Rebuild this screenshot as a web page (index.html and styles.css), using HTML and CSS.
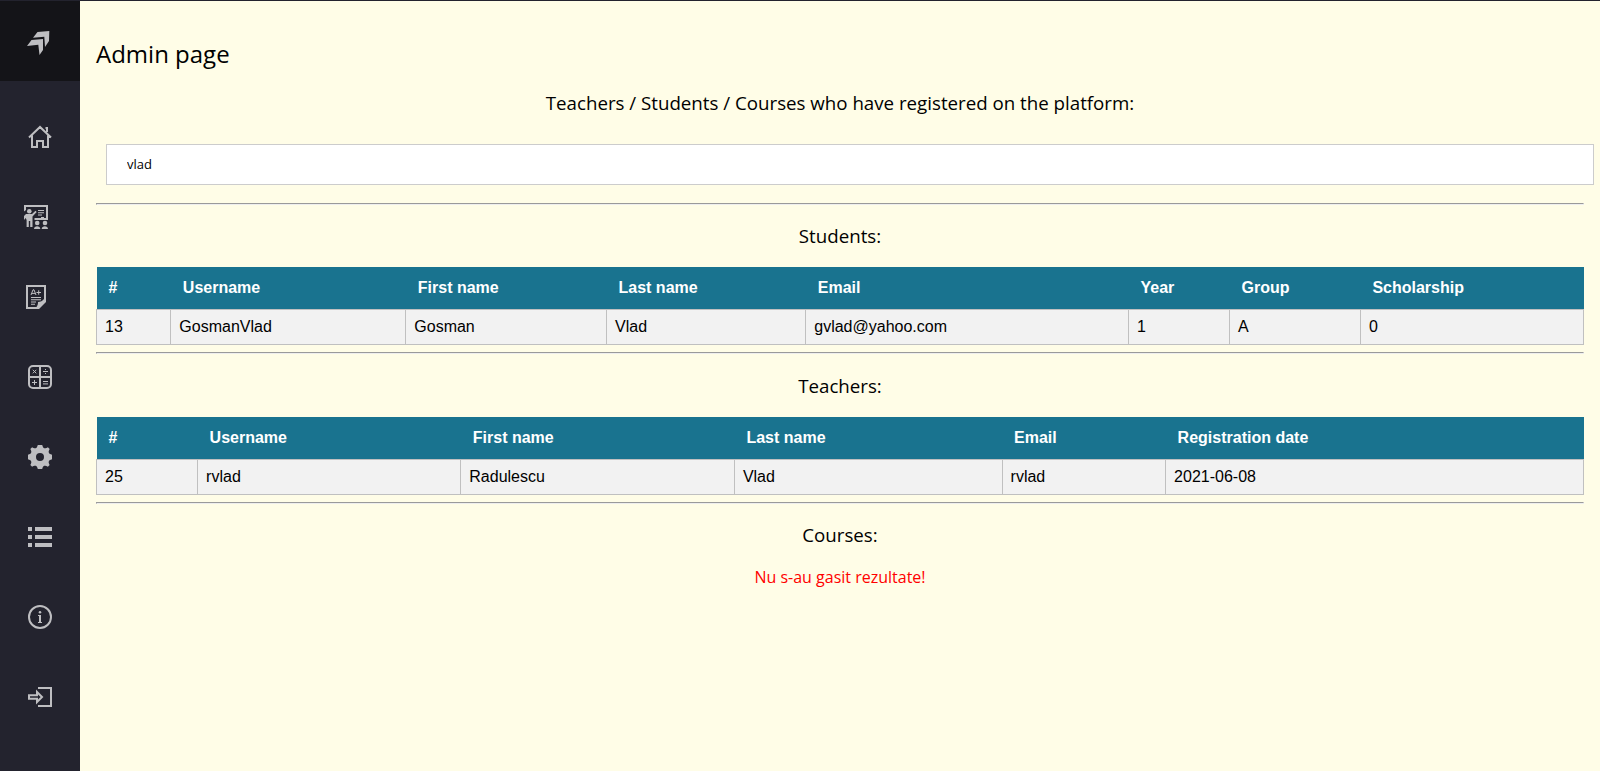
FILE: index.html
```html
<!DOCTYPE html>
<html lang="en">
<head>
<meta charset="utf-8">
<title>Admin page</title>
<link rel="stylesheet" href="styles.css">
</head>
<body>
<nav class="sidebar" aria-label="Main">
  <a class="logo" href="#" aria-label="Menu">
    <svg class="icon" viewBox="0 0 24 24"><path d="M21.300 2 9.500 3 5 8.800 16.300 7.800 17 18 21 12zM-1 17 3.500 11 15 10 15 21 11.500 26 10.300 15.800z"/></svg>
  </a>
  <ul class="nav-list">
    <li><a class="nav-link" href="#" aria-label="Home">
      <svg class="icon line" viewBox="0 0 24 24"><path d="M1 12.500 12 2 23 12.500M4 10.500V22H9V16H15V22H20V10.500M17.500 3H19V7"/></svg></a></li>
    <li><a class="nav-link shifted" href="#" aria-label="Courses">
      <svg class="icon" viewBox="0 0 24 24"><path d="M0 0H24V15H10.500V13H22V2H2V5L0 6.500z"/><circle cx="5.300" cy="6.200" r="2.300"/><path d="M2 9H8L11.500 5.800 12.700 7 8.500 11.500V22H6.200V16H4.800V22H2.600V15L1.600 13 0 15V11z"/><path d="M14 5H20V6H14zM14 7.200H20V8.200H14zM14 9.400H18V10.400H14zM17 12H20V13H17z"/><circle cx="13.200" cy="18" r="2.300"/><circle cx="21" cy="18" r="2.300"/><path d="M10 24C10 20.200 16.300 20.200 16.300 24zM17.700 24C17.700 20.200 24 20.200 24 24z"/></svg></a></li>
    <li><a class="nav-link shifted" href="#" aria-label="Grades">
      <svg class="icon" viewBox="0 0 24 24"><path fill-rule="evenodd" d="M2 0H22V17L15 24H2zM4 2V22H12.500C14 20 14 18.500 14 17 16.500 17 18.500 16 20 14V2z"/><path d="M7 12H17V13H7zM7 14.300H17V15.300H7zM7 16.600H12V17.600H7zM7 18.700H11V19.700H7z"/><path class="stroke" d="M7 10 9 4.800H10L12 10M8 8.400H11M12.500 7.500H17M14.700 5.300V9.700"/></svg></a></li>
    <li><a class="nav-link" href="#" aria-label="Calculator">
      <svg class="icon line" viewBox="0 0 24 24"><rect x="1" y="1" width="22" height="22" rx="4"/><path d="M12 1V23M1 12H23"/><path class="thin" d="M4.800 4.800 8.300 8.300M8.300 4.800 4.800 8.300M15 6.500H20M4 17.500H9M6.500 15V20M15 16.500H20M15 18.900H20M17.500 4V5M17.500 8V9"/></svg></a></li>
    <li><a class="nav-link" href="#" aria-label="Settings">
      <svg class="icon" viewBox="0 0 24 24"><path fill-rule="evenodd" d="M24 14.190V9.810C22.380 9.240 21.350 9 20.850 7.810 20.340 6.580 20.930 5.670 21.650 4.120L19.880 2.350C18.340 3.080 17.420 3.660 16.190 3.150 15 2.650 14.760 1.610 14.190 0H9.810C9.240 1.610 9 2.650 7.810 3.150 6.580 3.660 5.670 3.070 4.120 2.350L2.350 4.120C3.070 5.660 3.660 6.580 3.150 7.810 2.650 9 1.610 9.240 0 9.810V14.190C1.610 14.760 2.650 15 3.150 16.190 3.660 17.430 3.070 18.360 2.350 19.880L4.120 21.650C5.660 20.930 6.580 20.340 7.810 20.850 9 21.350 9.240 22.380 9.810 24H14.190C14.760 22.390 15 21.350 16.200 20.840 17.430 20.340 18.340 20.930 19.880 21.650L21.650 19.880C20.930 18.340 20.340 17.420 20.850 16.190 21.350 15 22.390 14.760 24 14.190zM12 16A4 4 0 1 1 12 8 4 4 0 0 1 12 16z"/></svg></a></li>
    <li><a class="nav-link" href="#" aria-label="Lists">
      <svg class="icon" viewBox="0 0 24 24"><path d="M0 2H4V6H0zM7 2H24V6H7zM0 10H4V14H0zM7 10H24V14H7zM0 18H4V22H0zM7 18H24V22H7z"/></svg></a></li>
    <li><a class="nav-link" href="#" aria-label="Information">
      <svg class="icon" viewBox="0 0 24 24"><path fill-rule="evenodd" d="M12 0A12 12 0 1 0 12 24 12 12 0 0 0 12 0zM12 2A10 10 0 1 1 12 22 10 10 0 0 1 12 2z"/><circle cx="12" cy="7.200" r="1.250"/><path d="M10 10H13V17H14V18H10V17H11V11H10z"/></svg></a></li>
    <li><a class="nav-link" href="#" aria-label="Log out">
      <svg class="icon line" viewBox="0 0 24 24"><path d="M10 3H23V21H10"/><path d="M1 10.200H9V7L14 12 9 17V13.800H1z"/></svg></a></li>
  </ul>
</nav>
<main class="content">
  <h2 class="page-title">Admin page</h2>
  <h3 class="section-title"><label for="search">Teachers / Students / Courses who have registered on the platform:</label></h3>
  <div class="search-row"><input class="search" id="search" type="text" value="vlad"></div>
  <hr class="rule">
  <h3 class="section-title">Students:</h3>
  <table class="records students">
    <thead><tr><th>#</th><th>Username</th><th>First name</th><th>Last name</th><th>Email</th><th>Year</th><th>Group</th><th>Scholarship</th></tr></thead>
    <tbody><tr><td>13</td><td>GosmanVlad</td><td>Gosman</td><td>Vlad</td><td>gvlad@yahoo.com</td><td>1</td><td>A</td><td>0</td></tr></tbody>
  </table>
  <hr class="rule">
  <h3 class="section-title">Teachers:</h3>
  <table class="records teachers">
    <thead><tr><th>#</th><th>Username</th><th>First name</th><th>Last name</th><th>Email</th><th>Registration date</th></tr></thead>
    <tbody><tr><td>25</td><td>rvlad</td><td>Radulescu</td><td>Vlad</td><td>rvlad</td><td>2021-06-08</td></tr></tbody>
  </table>
  <hr class="rule">
  <h3 class="section-title">Courses:</h3>
  <p class="empty">Nu s-au gasit rezultate!</p>
</main>
</body>
</html>
```
FILE: styles.css
```css
body {
  margin: 0;
  min-height: 100vh;
  box-sizing: border-box;
  display: flex;
  border-top: 1px solid #23232e;
  background: #fffde7;
  color: #000;
  font-family: "Open Sans", sans-serif;
  font-size: 16px;
}

.sidebar {
  flex: none;
  width: 80px;
  background: #23232e;
}

.logo,
.nav-link {
  display: flex;
  align-items: center;
  justify-content: center;
  height: 80px;
}

.logo {
  background: #141418;
}

.nav-list {
  margin: 16px 0 0;
  padding: 0;
  list-style: none;
}

.shifted {
  padding-right: 8px;
}

.icon {
  width: 24px;
  height: 24px;
  fill: #bebec1;
  overflow: visible;
}

.line {
  fill: none;
  stroke: #bebec1;
  stroke-width: 2;
}

.thin,
.stroke {
  fill: none;
  stroke: #bebec1;
  stroke-width: 1;
}

.content {
  flex: 1;
  min-width: 0;
  padding: 16px;
}

.page-title {
  margin: 20px 0;
  font-size: 24px;
  font-weight: 500;
}

.section-title {
  margin: 1em 0;
  font-weight: 500;
  text-align: center;
}

.search-row {
  display: flex;
}

.search {
  flex: none;
  box-sizing: border-box;
  width: 100%;
  margin: 10px;
  padding: 12px 20px;
  border: 1px solid #ccc;
  background: #fff;
  color: #000;
  font-family: "Open Sans", sans-serif;
  font-size: 13px;
  line-height: 15px;
}

.rule {
  margin: 8px 0;
  border: 1px solid;
  border-color: #9a9a9a #eee #eee #9a9a9a;
}

.records + .rule {
  margin-top: 7px;
}

.records {
  width: 100%;
  border-collapse: collapse;
  font-family: "Liberation Sans", Arial, sans-serif;
  font-size: 16px;
  line-height: 18px;
}

.records th {
  padding: 12px;
  background: #19738f;
  color: #fff;
  text-align: left;
}

.records td {
  padding: 8px;
  border: 1px solid #c0c0c0;
  background: #f2f2f2;
}

.students th:nth-child(1) { width: 5%; }
.students th:nth-child(2) { width: 15.8%; }
.students th:nth-child(3) { width: 13.5%; }
.students th:nth-child(4) { width: 13.4%; }
.students th:nth-child(5) { width: 21.7%; }
.students th:nth-child(6) { width: 6.8%; }
.students th:nth-child(7) { width: 8.8%; }
.students th:nth-child(8) { width: 15%; }

.teachers th:nth-child(1) { width: 6.8%; }
.teachers th:nth-child(2) { width: 17.7%; }
.teachers th:nth-child(3) { width: 18.4%; }
.teachers th:nth-child(4) { width: 18%; }
.teachers th:nth-child(5) { width: 11%; }
.teachers th:nth-child(6) { width: 28.1%; }

.empty {
  margin: 19px 0;
  color: #f00;
  text-align: center;
}
```
